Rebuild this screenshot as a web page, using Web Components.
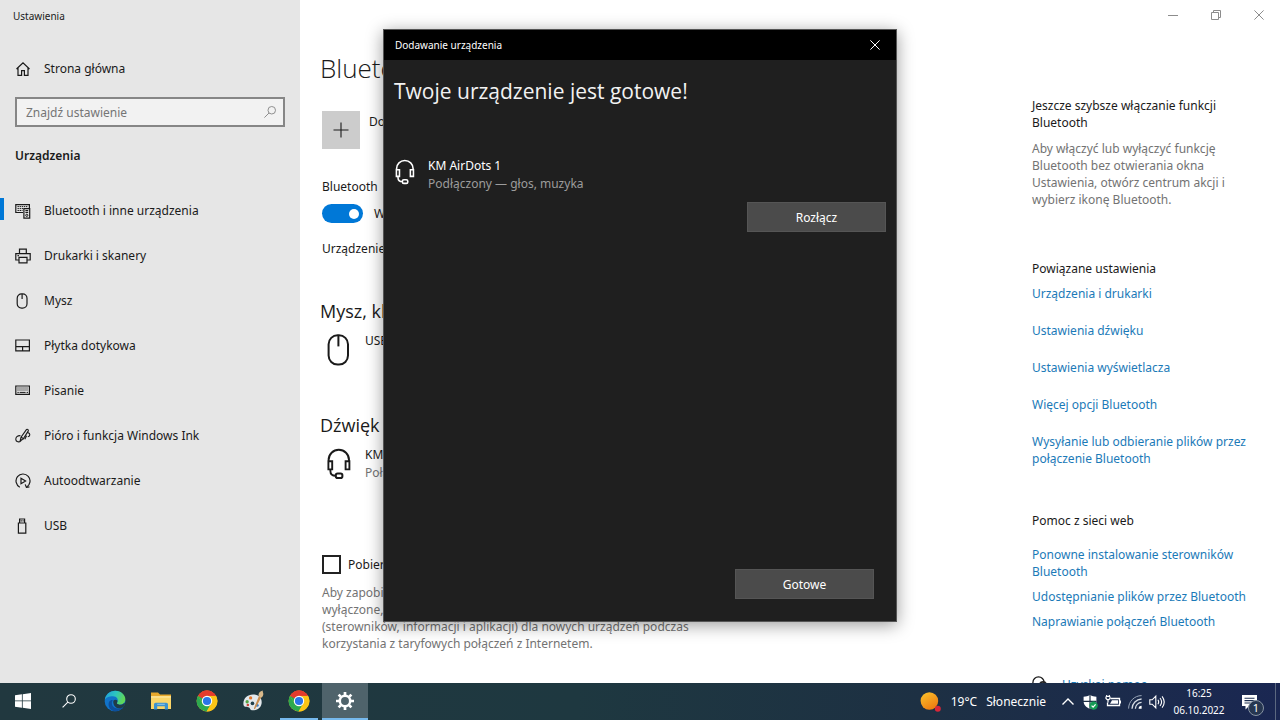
<!DOCTYPE html>
<html lang="pl">
<head>
<meta charset="utf-8">
<meta name="viewport" content="width=device-width, initial-scale=1">
<title>Ustawienia</title>
<style>
  html, body { margin: 0; height: 100%; }
  body {
    --text-small: 10px; --text-body: 12px; --line: 17px;
    --display: "Open Sans", "Noto Sans", sans-serif;
    --accent: #0078d7; --link: #1b7ab8; --muted: #737373;
    font: 12px/17px "Noto Sans", "Open Sans", sans-serif; color: #1a1a1a; background: #fff;
    overflow: hidden;
  }
</style>
</head>
<body>
<desk-top></desk-top>
<script>
const ICONS = {
  home: ['0 0 16 16', '<path d="M1.5 8 8 1.8 14.5 8M3 7v7.4h3.6V9.6h2.8v4.8H13V7" stroke-width="1.2"/>'],
  search: ['0 0 16 16', '<circle cx="10" cy="6" r="4.3" stroke-width="1.1"/><path d="M6.9 9.1 1.6 14.4" stroke-width="1.1"/>'],
  devices: ['0 0 16 16', '<path d="M8 9.5H.8V1.6h13.6V5" stroke-width="1.2"/><path d="M2.5 3.6h10.4M2.5 5.6h6M2.5 7.5h5" stroke-dasharray="1.4 .7"/><path d="M8.9 5.6h5.8v9.6H8.9zM10.4 7.6h2.8M10.4 9.5h2.8" stroke-width="1.2"/><circle cx="11.8" cy="12.3" r="1.1"/>'],
  printer: ['0 0 16 16', '<path d="M4.5 5.6V1.1h6.8v4.5M4 12H.8V5.6h14.4V12H12M4 9.4h8v5.4H4zM2.5 7.6h1.4" stroke-width="1.2"/>'],
  mouse: ['0 0 16 16', '<rect x="2.2" y=".8" width="9.8" height="14.4" rx="4.4" stroke-width="1.2"/><path d="M7.1 1v5" stroke-width="1.2"/>'],
  touchpad: ['0 0 16 16', '<path d="M.8 2h13.6v10.8H.8zM.8 8.600h13.6M7.6 8.600v4.200" stroke-width="1.2"/>'],
  keyboard: ['0 0 16 16', '<path d="M.8 3h13.6v8.4H.8z" stroke-width="1.2"/><path d="M2.4 5h10.6M2.4 7h10.6" stroke-width="1" stroke-dasharray="1.2 .8"/><path d="M2.4 9.4h1.4M4.6 9.4h6M11.6 9.4H13"/>'],
  pen: ['0 0 16 16', '<path d="M5.2 12.6 6 9.2 11.4 1.6c.6-.8 2.4.2 1.9 1.3L8 11.4zM6.4 9.2l1.8 1.4M12.8 4.6c2.8.6 2.6 3.6 0 4.2M11.6 7.8l-1.8 3.4M5.4 7.6C2.4 7.4.6 9.4.8 11.6c.2 2.4 3.4 3 5 1.2l1.4-1.6" stroke-width="1.1"/>'],
  autoplay: ['0 0 16 16', '<path d="M4.8 14.2A7 7 0 1 1 11.6 14" stroke-width="1.2"/><path d="M6 5.2 10.6 8 6 10.8zM10.2 11.4l1.2 3 3-.6" stroke-width="1.2"/>'],
  usb: ['0 0 16 16', '<path d="M3.400 5h7.4v10.2H3.400zM4.600 5V1h5v4M6.200 2.2v1.4M8.100 2.2v1.4" stroke-width="1.2"/>'],
  bigmouse: ['0 0 24 32', '<rect x="1.6" y="1.2" width="19.4" height="29.4" rx="9" stroke-width="2"/><path d="M11.4 1.4v11" stroke-width="2"/>'],
  headset: ['0 0 24 32', '<path d="M1.600 14V12a10.200 10.200 0 0 1 20.400 0v2M1.4 13.2h3.800v8.2H1.4zM18.600 13.2h3.800v8.2h-3.800zM3.400 21.4v1.6c0 3 2 4.8 5.400 4.8" stroke-width="1.9"/><rect x="8.8" y="25.6" width="6.6" height="4.400" rx="1.8" stroke-width="2"/>'],
  plus: ['0 0 16 16', '<path d="M8 .5v15M.5 8h15" stroke-width="1.1"/>'],
  minimize: ['0 0 10 10', '<path d="M0 5.5h10"/>'],
  restore: ['0 0 10 10', '<path d="M.5 2.5h7v7h-7zM2.5 2.5v-2h7v7h-2"/>'],
  close: ['0 0 10 10', '<path d="m.4.4 9.2 9.2M9.6.4.4 9.6"/>'],
  help: ['0 0 16 16', '<circle cx="6.5" cy="6.5" r="5.6" stroke-width="1.3"/><path d="M7 16V9a4 4 0 0 1 8 0v7z" fill="#222" stroke="none"/><path d="M9.2 8.6c.4-1.8 3.4-1.6 3.2.3 0 1-1.6 1.2-1.6 2.4" stroke="#fff"/>'],
  windows: ['0 0 16 16', '<g fill="#fff" stroke="none"><path d="M0 2.3 6.9 1.3v6.2H0zM7.7 1.2 16 0v7.5H7.7zM0 8.3h6.9v6.4L0 13.7zM7.7 8.3H16V16l-8.3-1.2z"/></g>'],
  edge: ['0 0 24 24', '<defs><linearGradient id="a" x1="0" y1="0" x2="1" y2=".3"><stop stop-color="#1f9bdc"/><stop offset=".55" stop-color="#2cc5c0"/><stop offset="1" stop-color="#5fd65a"/></linearGradient></defs><g stroke="none"><circle cx="12" cy="12" r="11.3" fill="#1173c8"/><path d="M.8 11C1.600 4.600 6.400.7 12.400.7c6.400 0 10.900 4.600 10.900 9.400 0 3.700-2.900 5.900-6 5.900-2.300 0-3.600-.9-3.100-1.900 2.200-3.500-.2-7.200-4.400-7.200C5.400 6.900 1.800 8.600.8 11z" fill="url(#a)"/><path d="M9.600 10.800c-2.700 4.400.2 9.700 6.200 9.300 2.600-.1 4.600-1.100 6-2.400-1.900 3.400-5.500 5.600-9.800 5.600C5.700 22.600 3.900 16 5.600 12.700c.9-1.600 2.400-2 4-1.900z" fill="#0d4f9c"/><path d="M10.200 11.600c1-1.300 3-1.400 4.200-.3.4 1.100.2 2.100-.3 3-.2.800.9 1.500 2.700 1.700 2.300.200 4.400-.6 5.600-2.200.7 1.300.5 2.700-.5 3.900-2.400 2.700-7 3.200-9.600.6-1.900-1.900-2.500-4.700-2.100-6.700z" fill="#203b48"/></g>'],
  folder: ['0 0 22 20', '<g stroke="none"><path d="M1 1.500h7l2 2h11V8H1z" fill="#e8a92c"/><path d="M1 5h20v13H1z" fill="#fbd668"/><path d="M1 5h20v2H1z" fill="#fde08a"/><path d="M4 18.500v-5c0-1 .7-1.700 1.700-1.700h10.600c1 0 1.700.7 1.700 1.700v5h-3.200v-3.300H7.200v3.300z" fill="#3d93cf"/><path d="M7.200 12.800h7.600v1H7.200z" fill="#8fc7ea"/></g>'],
  chrome: ['0 0 22 22', '<g stroke="none"><circle cx="11" cy="11" r="10.400" fill="#fbc516"/><path d="M11 11 2 5.800A10.400 10.400 0 0 1 20 5.800z" fill="#e33b2e"/><path d="M2 5.800A10.400 10.400 0 0 0 10.600 21.400L15.200 13.400 6.600 13.600z" fill="#2da94f"/><path d="M11 5.800h9A10.400 10.400 0 0 1 10.600 21.400l5-8z" fill="#fbc516"/><path d="M2 5.800 6.600 13.600 11 6z" fill="#2da94f"/><path d="M11 5.800 6.400 8.600 2 5.800A10.400 10.400 0 0 1 20 5.800z" fill="#e33b2e"/><circle cx="11" cy="11" r="5.200" fill="#fff"/><circle cx="11" cy="11" r="4.100" fill="#2a75e8"/></g>'],
  paint: ['0 0 24 24', '<g stroke="none"><path d="M1.500 15C1.500 9 6 5 12 5s9.500 3.400 9.500 8.400c0 5.400-4.500 8.800-9.800 8.800-3 0-2.600-2.400-4-3.200C5.600 18 1.500 19.600 1.500 15z" fill="#e3e8ec"/><circle cx="5.600" cy="12.800" r="1.800" fill="#57a646"/><circle cx="9.400" cy="8.600" r="1.800" fill="#e0762e"/><circle cx="6.400" cy="16.400" r="1.400" fill="#c94438"/><circle cx="11.400" cy="14.600" r="2" fill="#20404c"/><circle cx="16.500" cy="16.600" r="1.700" fill="#3c7fc6"/><path d="M18.600 6.400 21 8l-6.600 12.400-1.400.6.300-1.600z" fill="#c98d4e"/><path d="M18.200 6.600c-.5-2.600.6-5 4.400-6-.3 1.600 1 2.800.6 4.600-.3 1.600-1.400 2.800-2.400 3.200z" fill="#d8b98b"/></g>'],
  gear: ['0 0 20 20', '<g stroke="#fff"><circle cx="10" cy="10" r="5.200" stroke-width="2.500"/><path d="M10 1v3M10 16v3M1 10h3M16 10h3M3.600 3.600l2.200 2.200M14.200 14.200l2.200 2.200M3.600 16.400l2.200-2.200M14.200 5.800l2.200-2.200" stroke-width="2.700"/></g>'],
  sun: ['0 0 22 22', '<defs><linearGradient id="s" x1="0" y1="0" x2=".6" y2="1"><stop stop-color="#fbc52c"/><stop offset="1" stop-color="#ee7d12"/></linearGradient></defs><g stroke="none"><circle cx="9.400" cy="10" r="8.800" fill="url(#s)"/><circle cx="17.800" cy="17.800" r="3" fill="#d92638"/></g>'],
  chevron: ['0 0 16 16', '<path d="m1.500 10.500 5.500-5.500 5.500 5.500" stroke-width="1.400"/>'],
  shield: ['0 0 16 16', '<g stroke="none"><path d="M7 .8c2 1.400 4 1.900 6.400 1.900V7c0 4-2.400 6.300-6.400 8-4-1.700-6.400-4-6.400-8V2.700C3 2.700 5 2.200 7 .8z" fill="#fff"/><path d="M6.400 0h1.200v15H6.400zM0 6.800h13.400V8H0z" fill="#1e3046"/><circle cx="10.600" cy="11.600" r="4.200" fill="#159a55"/></g><path d="m8.600 11.600 1.500 1.500 2.500-2.800" stroke="#fff" stroke-width="1.200"/>'],
  battery: ['0 0 16 16', '<path d="M5.500 4.500h9v7h-12V8.600M15.400 6.500v3" stroke-width="1.300"/><path d="M7 6.200h6v3.600H5z" fill="#fff" stroke="none"/><path d="M1 2.500h4M1.700.9v1.600M4.300.9v1.600M1 2.500v2l1.200 1.200h1.600L5 4.500v-2M3 5.700v2.800" stroke-width="1.200"/>'],
  wifi: ['0 0 16 16', '<path d="M1.600 14.600C1.600 7.400 7.400 1.600 14.600 1.600" stroke="#9aa7b8"/><path d="M5 14.800A10 10 0 0 1 14.600 5M8.400 14.800a6.400 6.400 0 0 1 6.200-6.400" stroke-width="1.300" stroke="#d5dbe3"/><path d="M11.600 14.800a3 3 0 0 1 3-3v3z" fill="#fff" stroke="none"/>'],
  volume: ['0 0 16 16', '<path d="M.8 5.800h2.400l3.600-3.600v11.600L3.200 10.200H.8zM8.900 5.800c1 1.400 1 3 0 4.400M11 4c2 2.500 2 5.500 0 8M13.100 2.300c2.700 3.600 2.700 7.800 0 11.400" stroke-width="1.100"/>'],
  notes: ['0 0 16 16', '<path d="M0 1h15v11H7L3.500 15.500V12H0z" fill="#fff" stroke="none"/><path d="M2.500 4.200h10M2.500 6.600h10M2.500 9h6" stroke="#1c2e50" stroke-width="1.100"/>']
};

/* Attaches an open shadow root holding the given styles and markup. */
class Base extends HTMLElement {
  render(css, html) {
    const t = document.createElement('template');
    t.innerHTML = `<style>*{box-sizing:border-box}${css}</style>${html}`;
    this.attachShadow({ mode: 'open' }).append(t.content.cloneNode(true));
  }
}

customElements.define('ui-icon', class extends Base {
  connectedCallback() {
    const [box, body] = ICONS[this.getAttribute('name')];
    this.render(':host{display:block;flex:none;width:16px;height:16px}svg{display:block;width:100%;height:100%}',
      `<svg viewBox="${box}" fill="none" stroke="currentColor" aria-hidden="true">${body}</svg>`);
  }
});

customElements.define('nav-item', class extends Base {
  connectedCallback() {
    this.render(`
      :host{display:block}
      a{display:flex;align-items:center;gap:13px;height:45px;padding-left:15px;color:inherit;text-decoration:none;position:relative}
      :host([active]) a::before{content:"";position:absolute;left:0;top:10px;width:4px;height:22px;background:var(--accent)}`,
      `<a href="#"><ui-icon name="${this.getAttribute('icon')}"></ui-icon><slot></slot></a>`);
  }
});

customElements.define('settings-nav', class extends Base {
  connectedCallback() {
    this.render(`
      :host{display:flex;flex-direction:column;background:#e6e6e6}
      .title{font-size:var(--text-small);line-height:32px;padding-left:13px}
      .home{margin-top:14px}
      .search{display:flex;align-items:center;height:30px;margin:6px 15px 0;border:2px solid #868686;background:#f2f2f2;padding:0 6px 0 9px;color:#8a8a8a}
      input{flex:1;min-width:0;border:0;padding:0;outline:0;background:none;font:inherit;color:#333}
      input::placeholder{color:#757575;opacity:1}
      .search ui-icon{width:14px;height:14px}
      h2{margin:20px 15px 23px;font-size:var(--text-body);line-height:18px;font-weight:600}`,
      `<div class="title">Ustawienia</div>
       <nav-item class="home" icon="home">Strona główna</nav-item>
       <label class="search"><input type="text" placeholder="Znajdź ustawienie" aria-label="Znajdź ustawienie"><ui-icon name="search"></ui-icon></label>
       <h2>Urządzenia</h2>
       <nav>
         <nav-item icon="devices" active>Bluetooth i inne urządzenia</nav-item>
         <nav-item icon="printer">Drukarki i skanery</nav-item>
         <nav-item icon="mouse">Mysz</nav-item>
         <nav-item icon="touchpad">Płytka dotykowa</nav-item>
         <nav-item icon="keyboard">Pisanie</nav-item>
         <nav-item icon="pen">Pióro i funkcja Windows Ink</nav-item>
         <nav-item icon="autoplay">Autoodtwarzanie</nav-item>
         <nav-item icon="usb">USB</nav-item>
       </nav>`);
  }
});

customElements.define('device-row', class extends Base {
  connectedCallback() {
    this.render(`
      :host{display:flex;gap:var(--device-gap,14px);padding-left:var(--device-pad,5px);min-height:36px;line-height:18px}
      ui-icon{width:var(--device-icon,24px);height:var(--device-icon-height,32px);margin-top:2px}
      .status{color:var(--device-status,var(--muted))}`,
      `<ui-icon name="${this.getAttribute('icon')}"></ui-icon>
       <div><div><slot></slot></div><div class="status"><slot name="status"></slot></div></div>`);
  }
});

customElements.define('bluetooth-page', class extends Base {
  connectedCallback() {
    this.render(`
      :host{display:block;padding:20px 0 0 22px}
      h1,h2,p{margin:0;font-weight:400}
      h1,h2{margin-left:-2px}
      h1{font:300 26px/36px var(--display)}
      h2{font:18px/24px var(--display);margin-bottom:9px}
      .add{display:flex;gap:9px;margin-top:25px;padding:0;border:0;background:none;font:inherit;color:inherit;text-align:left}
      .add span{display:grid;place-items:center;width:38px;height:38px;background:#ccc}
      .add b{font-weight:400;padding-top:2px}
      .caption{margin-top:29px}
      .toggle{display:flex;align-items:center;gap:11px;margin-top:9px;height:19px}
      .toggle input{appearance:none;margin:0;width:41px;height:19px;border-radius:10px;background:var(--accent);display:flex;align-items:center;justify-content:flex-end;padding-right:4px}
      .toggle input::before{content:"";width:10px;height:10px;border-radius:50%;background:#fff}
      .visible{margin:17px 0 42px}
      device-row + h2{margin-top:45px}
      .metered{display:flex;align-items:center;gap:7px;margin-top:73px}
      .metered input{appearance:none;margin:0;width:19px;height:19px;border:2px solid #222;background:#fff}
      .note{margin-top:10px;color:var(--muted);white-space:nowrap}`,
      `<h1>Bluetooth i inne urządzenia</h1>
       <button class="add" type="button"><span><ui-icon name="plus"></ui-icon></span><b>Dodaj urządzenie Bluetooth lub inne</b></button>
       <div class="caption">Bluetooth</div>
       <label class="toggle"><input type="checkbox" role="switch" checked>Włączone</label>
       <p class="visible">Urządzenie jest teraz wykrywalne</p>
       <h2>Mysz, klawiatura i pióro</h2>
       <device-row icon="bigmouse">USB Optical Mouse</device-row>
       <h2>Dźwięk</h2>
       <device-row icon="headset">KM AirDots 1<span slot="status">Połączono</span></device-row>
       <label class="metered"><input type="checkbox">Pobieranie przez połączenia taryfowe</label>
       <p class="note">Aby zapobiec dodatkowym opłatom, pozostaw to<br>wyłączone, a pobieranie oprogramowania<br>(sterowników, informacji i aplikacji) dla nowych urządzeń podczas<br>korzystania z taryfowych połączeń z Internetem.</p>`);
  }
});

customElements.define('related-panel', class extends Base {
  connectedCallback() {
    this.render(`
      :host{display:block;padding:67px 20px 0 0}
      h2,p{margin:0;font-size:var(--text-body);line-height:var(--line);font-weight:400}
      p{margin:9px 0 52px;color:var(--muted)}
      a{color:var(--link);text-decoration:none}
      .links{display:flex;flex-direction:column;gap:20px;margin:8px 0 45px}
      .links.web{gap:8px;margin:17px 0 46px}
      .help{display:flex;gap:14px}`,
      `<h2>Jeszcze szybsze włączanie funkcji Bluetooth</h2>
       <p>Aby włączyć lub wyłączyć funkcję Bluetooth bez otwierania okna Ustawienia, otwórz centrum akcji i wybierz ikonę Bluetooth.</p>
       <h2>Powiązane ustawienia</h2>
       <div class="links"><a href="#">Urządzenia i drukarki</a><a href="#">Ustawienia dźwięku</a><a href="#">Ustawienia wyświetlacza</a><a href="#">Więcej opcji Bluetooth</a><a href="#">Wysyłanie lub odbieranie plików przez połączenie Bluetooth</a></div>
       <h2>Pomoc z sieci web</h2>
       <div class="links web"><a href="#">Ponowne instalowanie sterowników Bluetooth</a><a href="#">Udostępnianie plików przez Bluetooth</a><a href="#">Naprawianie połączeń Bluetooth</a></div>
       <div class="help"><ui-icon name="help"></ui-icon><a href="#">Uzyskaj pomoc</a></div>`);
  }
});

customElements.define('settings-window', class extends Base {
  connectedCallback() {
    this.render(`
      :host{display:grid;grid-template-columns:300px minmax(0,1fr);overflow:hidden}
      .controls{display:flex;justify-content:flex-end;color:#8c8c8c}
      .controls button{display:grid;place-items:center;width:43px;height:30px;padding:0;border:0;background:none;color:inherit}
      .controls ui-icon{width:10px;height:10px}
      .page{display:grid;grid-template-columns:minmax(0,1fr) 248px}`,
      `<settings-nav></settings-nav>
       <div>
         <div class="controls">
           <button type="button" aria-label="Minimalizuj"><ui-icon name="minimize"></ui-icon></button>
           <button type="button" aria-label="Przywróć"><ui-icon name="restore"></ui-icon></button>
           <button type="button" aria-label="Zamknij"><ui-icon name="close"></ui-icon></button>
         </div>
         <div class="page"><bluetooth-page></bluetooth-page><related-panel></related-panel></div>
       </div>`);
  }
});

customElements.define('pairing-dialog', class extends Base {
  connectedCallback() {
    this.render(`
      :host{display:flex;flex-direction:column;width:514px;height:593px;background:#1f1f1f;color:#fff;border:1px solid #555;box-shadow:0 3px 16px rgba(0,0,0,.4)}
      header{display:flex;align-items:center;justify-content:space-between;height:30px;padding-left:11px;background:#000;font-size:var(--text-small)}
      header button{display:grid;place-items:center;width:42px;height:30px;padding:0;border:0;background:none;color:#fff}
      header ui-icon{width:10px;height:10px}
      h1{margin:16px 10px 51px;font:21px/30px var(--display);color:#f2f2f2}
      device-row{--device-icon:20px;--device-icon-height:26px;--device-gap:13px;--device-pad:11px;--device-status:#9c9c9c}
      .action{align-self:flex-end;width:139px;height:30px;padding:0;border:1px solid #555;background:#4b4b4b;color:#fff;font:inherit}
      .disconnect{margin:9px 10px 0}
      .done{margin:auto 22px 22px}`,
      `<header>Dodawanie urządzenia<button type="button" aria-label="Zamknij"><ui-icon name="close"></ui-icon></button></header>
       <h1>Twoje urządzenie jest gotowe!</h1>
       <device-row icon="headset">KM AirDots 1<span slot="status">Podłączony — głos, muzyka</span></device-row>
       <button class="action disconnect" type="button">Rozłącz</button>
       <button class="action done" type="button">Gotowe</button>`);
  }
});

customElements.define('task-button', class extends Base {
  connectedCallback() {
    this.render(`
      :host{display:block;width:46px}
      button{display:grid;place-items:center;width:100%;height:37px;padding:0;border:0;border-bottom:2px solid transparent;background:none;color:#fff}
      :host([open]) button{border-color:#76b9ed}
      :host([open]:not([active])) button{width:38px;margin:0 4px}
      :host([active]) button{background-color:#4f636b}
      ui-icon{width:var(--size,22px);height:var(--size,22px)}`,
      `<button type="button" aria-label="${this.getAttribute('label')}"><ui-icon name="${this.getAttribute('icon')}"></ui-icon></button>`);
  }
});

customElements.define('task-bar', class extends Base {
  connectedCallback() {
    this.render(`
      :host{display:flex;align-items:center;height:37px;color:#fff;background:linear-gradient(90deg,#21383f 0%,#1e3840 45%,#1d3043 72%,#1a2752 100%)}
      .apps{display:flex;flex:1}
      .small{--size:16px}
      .gear{--size:20px}
      .weather{display:flex;align-items:center;gap:9px;margin-right:12px}
      .weather ui-icon{width:22px;height:22px}
      .tray{display:flex}
      .tray ui-icon{width:16px;margin:0 3px}
      time{width:57px;padding-left:5px;text-align:center;font-size:var(--text-small);line-height:17px}
      .notes{position:relative;display:grid;place-items:center;width:50px;height:37px;padding:0;border:0;background:none;color:#fff}
      .notes b{position:absolute;left:23px;top:17px;width:16px;height:16px;border:1px solid #8793a3;border-radius:50%;background:#263650;font:11px/14px "Noto Sans",sans-serif}
      .peek{width:5px;height:37px;border-left:1px solid #5b6880}`,
      `<div class="apps">
         <task-button class="small" icon="windows" label="Start"></task-button>
         <task-button class="small" icon="search" label="Wyszukaj"></task-button>
         <task-button icon="edge" label="Microsoft Edge"></task-button>
         <task-button icon="folder" label="Eksplorator plików"></task-button>
         <task-button icon="chrome" label="Google Chrome"></task-button>
         <task-button icon="paint" label="Paint"></task-button>
         <task-button icon="chrome" label="Google Chrome" open></task-button>
         <task-button class="gear" icon="gear" label="Ustawienia" open active></task-button>
       </div>
       <div class="weather"><ui-icon name="sun"></ui-icon><span>19°C</span><span>Słonecznie</span></div>
       <div class="tray"><ui-icon name="chevron"></ui-icon><ui-icon name="shield"></ui-icon><ui-icon name="battery"></ui-icon><ui-icon name="wifi"></ui-icon><ui-icon name="volume"></ui-icon></div>
       <time>16:25<br>06.10.2022</time>
       <button class="notes" type="button" aria-label="Powiadomienia"><ui-icon name="notes"></ui-icon><b>1</b></button>
       <div class="peek"></div>`);
  }
});

customElements.define('desk-top', class extends Base {
  connectedCallback() {
    this.render(`
      :host{display:flex;flex-direction:column;height:100vh;position:relative}
      settings-window{flex:1;min-height:0}
      pairing-dialog{position:absolute;top:29px;left:calc(50% - 257px)}`,
      `<settings-window></settings-window><task-bar></task-bar><pairing-dialog></pairing-dialog>`);
  }
});
</script>
</body>
</html>
